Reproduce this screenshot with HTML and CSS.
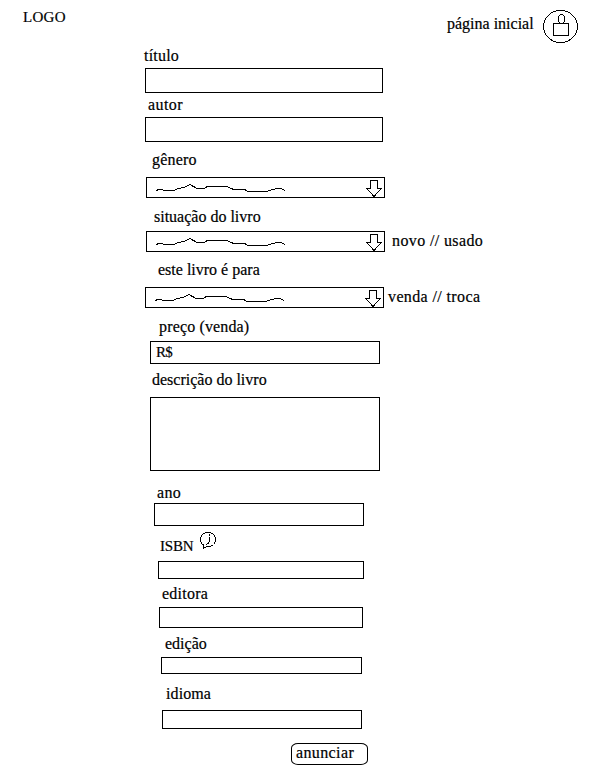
FILE: index.html
```html
<!DOCTYPE html>
<html lang="pt-BR">
<head>
<meta charset="utf-8">
<title>Anunciar livro</title>
<link rel="stylesheet" href="styles.css">
</head>
<body>
<svg class="defs" aria-hidden="true">
  <symbol id="wave" viewBox="0 0 130 14"><path d="M0 10.5 4 9.2 8 10.3H18L21 8.9 28 7.3 34 4.6 37 6.2 41 8.5H48L51 6.6H71L77 9.2 89 9.6 92 11.5H111L116 9.7 121 8.5H125L129 10.6"/></symbol>
  <symbol id="arrow" viewBox="0 0 16 17"><path d="M4.5.5h7v8h4L8 16.4 .5 8.5h4zM7 15.5h2"/></symbol>
</svg>
<header class="header">
  <div class="logo">LOGO</div>
  <nav class="nav">
    <span class="home">página inicial</span>
    <svg class="avatar" viewBox="0 0 35 33"><ellipse cx="17.5" cy="16.5" rx="17" ry="16"/><ellipse cx="18.5" cy="9" rx="3" ry="4.5"/><path d="M10.5 13.5h15v12h-15z"/></svg>
  </nav>
</header>
<main class="form">
  <section class="field title">
    <div class="label">título</div>
    <div class="box"></div>
  </section>
  <section class="field author">
    <div class="label">autor</div>
    <div class="box"></div>
  </section>
  <section class="field genre">
    <div class="label">gênero</div>
    <div class="row"><div class="box select"><svg class="wave"><use href="#wave"/></svg><svg class="arrow"><use href="#arrow"/></svg></div></div>
  </section>
  <section class="field condition">
    <div class="label">situação do livro</div>
    <div class="row"><div class="box select"><svg class="wave"><use href="#wave"/></svg><svg class="arrow"><use href="#arrow"/></svg></div><span class="note">novo // usado</span></div>
  </section>
  <section class="field purpose">
    <div class="label">este livro é para</div>
    <div class="row"><div class="box select"><svg class="wave"><use href="#wave"/></svg><svg class="arrow"><use href="#arrow"/></svg></div><span class="note">venda // troca</span></div>
  </section>
  <section class="field price">
    <div class="label">preço (venda)</div>
    <div class="box"><span class="currency">R$</span></div>
  </section>
  <section class="field description">
    <div class="label">descrição do livro</div>
    <div class="box"></div>
  </section>
  <section class="field year">
    <div class="label">ano</div>
    <div class="box"></div>
  </section>
  <section class="field isbn">
    <div class="label"><span class="isbn-text">ISBN</span><svg class="info" viewBox="0 0 17 18"><path d="M4.5 13.5 2.5 12.5.5 9.5V5.5L2.5 2.5 5.5.5H10.5L13.5 2.5 15.5 5.5V9.5L13.5 12.5 10.5 14.5H6.5L3.5 16.5V13.5M9.5 2V3.5M9.5 5V8.5L8.5 11.5 6 12.5"/></svg></div>
    <div class="box"></div>
  </section>
  <section class="field publisher">
    <div class="label">editora</div>
    <div class="box"></div>
  </section>
  <section class="field edition">
    <div class="label">edição</div>
    <div class="box"></div>
  </section>
  <section class="field language">
    <div class="label">idioma</div>
    <div class="box"></div>
  </section>
  <button class="submit"><span>anunciar</span></button>
</main>
</body>
</html>
```

FILE: styles.css
```css
* { box-sizing: border-box; }
body {
  margin: 0;
  background: #fff;
  color: #000;
  font: 16px/20px "Liberation Serif", serif;
  -webkit-text-stroke: .2px #000;
  white-space: nowrap;
}
svg {
  display: block;
  flex: none;
  fill: none;
  stroke: #000;
  stroke-width: 1;
  shape-rendering: crispEdges;
}
.defs { width: 0; height: 0; position: absolute; }
.header {
  display: flex;
  justify-content: space-between;
  height: 46px;
  padding: 7px 37px 0 23px;
}
.logo { font-size: 15px; letter-spacing: .3px; }
.nav { display: flex; align-items: flex-start; padding-top: 3px; }
.home { width: 96px; margin-top: 4px; }
.avatar { width: 35px; height: 33px; }
.form { display: flex; flex-direction: column; align-items: flex-start; }
.label { height: 20px; }
.box { border: 1px solid #000; }
.row { display: flex; }
.select {
  display: flex;
  justify-content: space-between;
  width: 239px;
  height: 21px;
  padding: 2px 2px 0 9px;
}
.wave { width: 130px; height: 14px; }
.arrow { width: 16px; height: 17px; }
.note { letter-spacing: .38px; }

.title { margin-left: 145px; }
.title .label { margin-left: -1px; letter-spacing: .2px; }
.title .box, .author .box { width: 238px; height: 25px; margin-top: 2px; }
.author { margin: 2px 0 0 145px; }
.author .label { margin-left: 3px; letter-spacing: .4px; }
.genre { margin: 8px 0 0 146px; }
.genre .label { margin-left: 6px; letter-spacing: .2px; }
.genre .row { margin-top: 7px; }
.condition { margin: 9px 0 0 146px; }
.condition .label { margin-left: 8px; }
.condition .row { margin-top: 4px; }
.condition .note { margin-left: 7px; }
.purpose { margin: 8px 0 0 145px; }
.purpose .label { margin-left: 13px; }
.purpose .row { margin-top: 7px; }
.purpose .note { margin-left: 4px; }
.price { margin: 9px 0 0 150px; }
.price .label { margin-left: 9px; letter-spacing: .15px; }
.price .box { width: 230px; height: 23px; margin-top: 4px; padding-left: 5px; }
.currency { font-size: 15px; letter-spacing: -.7px; }
.description { margin: 6px 0 0 150px; }
.description .label { margin-left: 2px; }
.description .box { width: 230px; height: 74px; margin-top: 7px; }
.year { margin: 12px 0 0 154px; }
.year .label { margin-left: 3px; letter-spacing: .3px; }
.year .box { width: 210px; height: 23px; }
.isbn { margin: 10px 0 0 158px; }
.isbn .label { display: flex; margin-left: 2px; }
.isbn-text { width: 40px; font-size: 15px; letter-spacing: -.2px; }
.info { width: 17px; height: 18px; margin-top: -4px; }
.isbn .box { width: 206px; height: 18px; margin-top: 5px; }
.publisher { margin: 5px 0 0 159px; }
.publisher .label { margin-left: 3px; letter-spacing: .25px; }
.publisher .box { width: 204px; height: 21px; margin-top: 3px; }
.edition { margin: 6px 0 0 161px; }
.edition .label { margin-left: 4px; }
.edition .box { width: 201px; height: 17px; margin-top: 3px; }
.language { margin: 10px 0 0 162px; }
.language .label { margin-left: 4px; letter-spacing: .1px; }
.language .box { width: 200px; height: 19px; margin-top: 6px; }
.submit {
  width: 77px;
  height: 22px;
  margin: 14px 0 0 291px;
  padding: 0 0 2px 4px;
  border: 1px solid #000;
  border-radius: 7px / 5px;
  background: #fff;
  color: #000;
  font: inherit;
  line-height: 18px;
  letter-spacing: .38px;
  text-align: left;
}
```
